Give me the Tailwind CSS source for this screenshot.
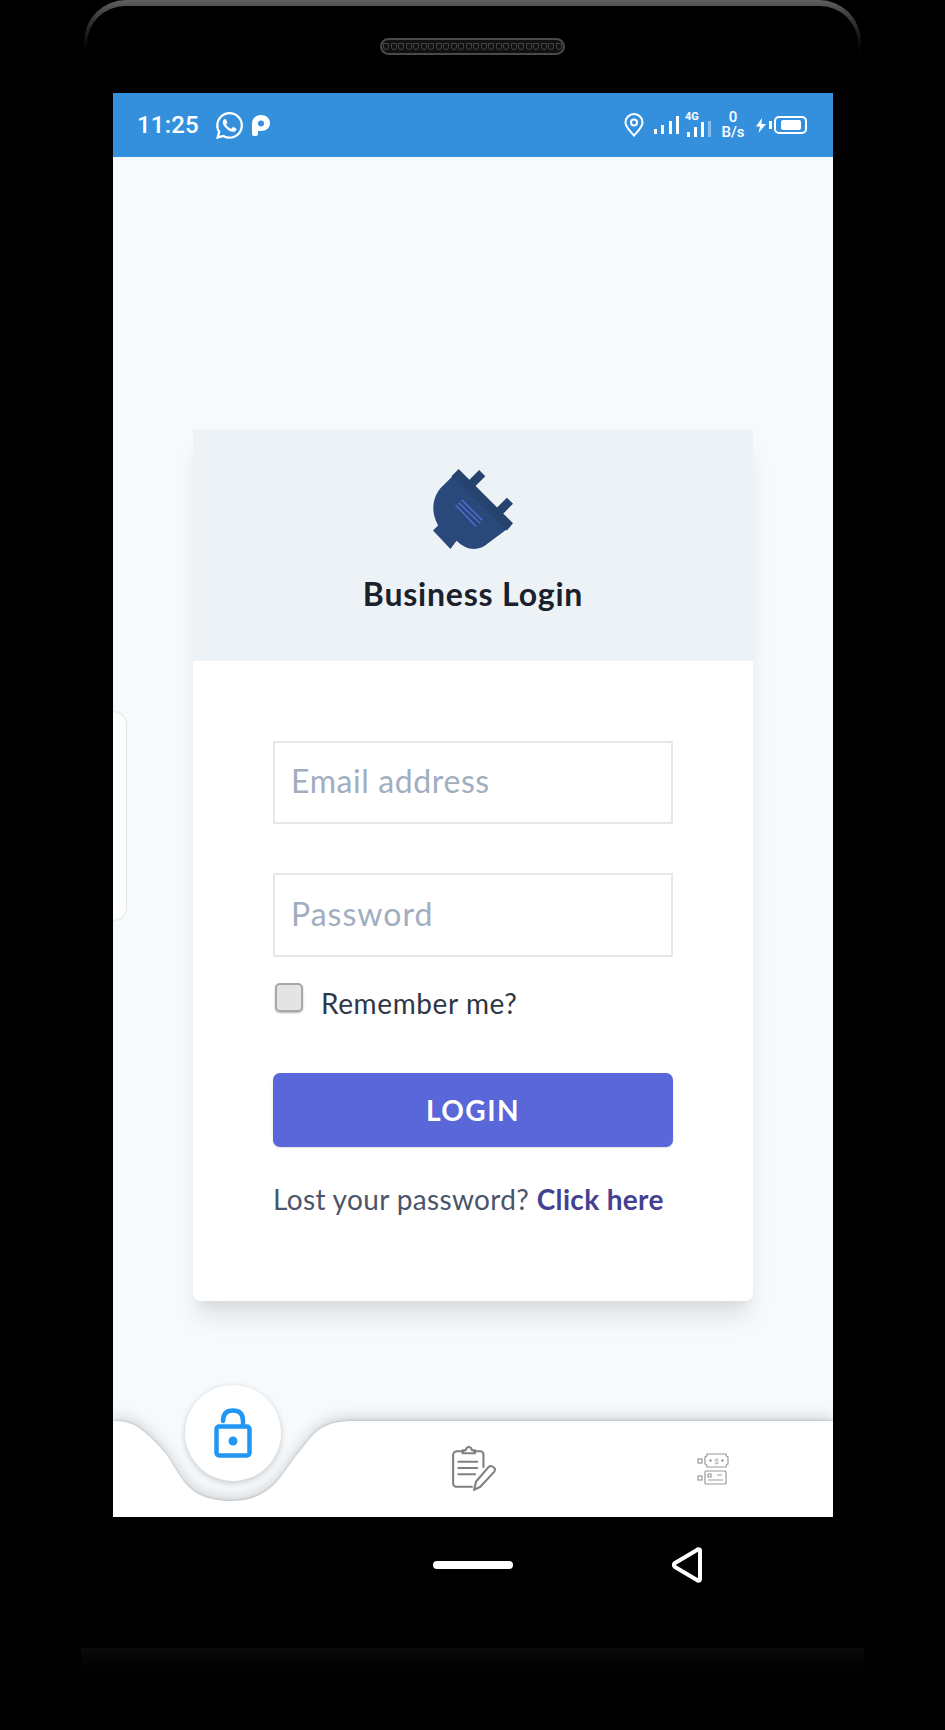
<!DOCTYPE html>
<html lang="en">
<head>
  <meta charset="UTF-8" />
  <meta name="viewport" content="width=device-width, initial-scale=1.0"/>
  <title>Business Login</title>
  <script src="https://cdn.jsdelivr.net/npm/@tailwindcss/browser@4"></script>
</head>
<body class="w-[945px] h-[1730px] bg-black overflow-hidden flex flex-col font-['Lato',sans-serif]">

  <!-- phone top: edge highlight and speaker -->
  <div class="h-[93px] px-[84px] shrink-0">
    <div class="h-[62px] rounded-t-[42px] bg-linear-to-b from-[#606060] to-black pt-[6px] px-[3px]">
      <div class="h-full rounded-t-[38px] bg-black flex justify-center pt-[32px]">
        <div class="w-[185px] h-[17px] rounded-full bg-[#111] border-2 border-[#4a4a4a] flex items-center justify-center gap-[1.5px]">
          <span class="w-[6px] h-[7px] rounded-b-full border border-[#444]"></span><span class="w-[6px] h-[7px] rounded-b-full border border-[#444]"></span><span class="w-[6px] h-[7px] rounded-b-full border border-[#444]"></span><span class="w-[6px] h-[7px] rounded-b-full border border-[#444]"></span><span class="w-[6px] h-[7px] rounded-b-full border border-[#444]"></span><span class="w-[6px] h-[7px] rounded-b-full border border-[#444]"></span><span class="w-[6px] h-[7px] rounded-b-full border border-[#444]"></span><span class="w-[6px] h-[7px] rounded-b-full border border-[#444]"></span><span class="w-[6px] h-[7px] rounded-b-full border border-[#444]"></span><span class="w-[6px] h-[7px] rounded-b-full border border-[#444]"></span><span class="w-[6px] h-[7px] rounded-b-full border border-[#444]"></span><span class="w-[6px] h-[7px] rounded-b-full border border-[#444]"></span><span class="w-[6px] h-[7px] rounded-b-full border border-[#444]"></span><span class="w-[6px] h-[7px] rounded-b-full border border-[#444]"></span><span class="w-[6px] h-[7px] rounded-b-full border border-[#444]"></span><span class="w-[6px] h-[7px] rounded-b-full border border-[#444]"></span><span class="w-[6px] h-[7px] rounded-b-full border border-[#444]"></span><span class="w-[6px] h-[7px] rounded-b-full border border-[#444]"></span><span class="w-[6px] h-[7px] rounded-b-full border border-[#444]"></span><span class="w-[6px] h-[7px] rounded-b-full border border-[#444]"></span><span class="w-[6px] h-[7px] rounded-b-full border border-[#444]"></span><span class="w-[6px] h-[7px] rounded-b-full border border-[#444]"></span><span class="w-[6px] h-[7px] rounded-b-full border border-[#444]"></span><span class="w-[6px] h-[7px] rounded-b-full border border-[#444]"></span>
        </div>
      </div>
    </div>
  </div>

  <!-- screen -->
  <div class="relative ml-[113px] w-[720px] h-[1424px] shrink-0 flex flex-col bg-[#f7fafc] overflow-hidden">

    <!-- status bar -->
    <div class="h-[64px] shrink-0 bg-[#3490dc] text-white flex items-center pl-[24px] pr-[26px] font-['Roboto',sans-serif]">
      <span class="text-[24px] font-medium tracking-[0.2px] leading-none">11:25</span>
      <svg class="ml-[17px]" width="27" height="27" viewBox="0 0 24 24" fill="white"><path d="M17.472 14.382c-.297-.149-1.758-.867-2.03-.967-.273-.099-.471-.148-.67.15-.197.297-.767.966-.94 1.164-.173.199-.347.223-.644.075-.297-.15-1.255-.463-2.39-1.475-.883-.788-1.48-1.761-1.653-2.059-.173-.297-.018-.458.13-.606.134-.133.298-.347.446-.52.149-.174.198-.298.298-.497.099-.198.05-.371-.025-.52-.075-.149-.669-1.612-.916-2.207-.242-.579-.487-.5-.669-.51-.173-.008-.371-.01-.57-.01-.198 0-.52.074-.792.372-.272.297-1.04 1.016-1.04 2.479 0 1.462 1.065 2.875 1.213 3.074.149.198 2.096 3.2 5.077 4.487.709.306 1.262.489 1.694.625.712.227 1.36.195 1.871.118.571-.085 1.758-.719 2.006-1.413.248-.694.248-1.289.173-1.413-.074-.124-.272-.198-.57-.347m-5.421 7.403h-.004a9.87 9.87 0 01-5.031-1.378l-.361-.214-3.741.982.998-3.648-.235-.374a9.86 9.86 0 01-1.51-5.26c.001-5.45 4.436-9.884 9.888-9.884 2.64 0 5.122 1.03 6.988 2.898a9.825 9.825 0 012.893 6.994c-.003 5.45-4.437 9.884-9.885 9.884m8.413-18.297A11.815 11.815 0 0012.05 0C5.495 0 .16 5.335.157 11.892c0 2.096.547 4.142 1.588 5.945L.057 24l6.305-1.654a11.882 11.882 0 005.683 1.448h.005c6.554 0 11.89-5.335 11.893-11.893a11.821 11.821 0 00-3.48-8.413z"/></svg>
      <svg class="ml-[9px]" width="18" height="21" viewBox="0 0 18 21" fill="white"><path fill-rule="evenodd" d="M0 8.500C0 3.500 4 0 9 0s9 3.500 9 8s-3.500 8-9 8H6v3a2 2 0 0 1-2 2H2a2 2 0 0 1-2-2ZM6 8.500a3 3 0 1 0 6 0a3 3 0 1 0-6 0Z"/></svg>

      <div class="ml-auto flex items-center">
        <svg width="20" height="24" viewBox="0 0 20 24" fill="none" stroke="white" stroke-width="2"><path d="M10 22.500C6 18 1.500 14 1.500 9.500a8.500 8.500 0 0 1 17 0C18.500 14 14 18 10 22.500Z"/><circle cx="10" cy="9.500" r="3"/></svg>
        <svg class="ml-[10px]" width="25" height="18" viewBox="0 0 25 18" fill="white"><rect x="0" y="13" width="3" height="5"/><rect x="7" y="9" width="3" height="9"/><rect x="15" y="5" width="3" height="13"/><rect x="22" y="0" width="3" height="18"/></svg>
        <div class="ml-[6px] w-[27px] h-[24px] flex flex-col">
          <span class="text-[11px] leading-[8px] font-bold">4G</span>
          <svg width="26" height="16" viewBox="0 0 26 16" fill="white"><rect x="2" y="11" width="3" height="5"/><rect x="9" y="6" width="3" height="10"/><rect x="16" y="1" width="3" height="15"/><rect x="23" y="0" width="3" height="16" fill-opacity=".4"/></svg>
        </div>
        <div class="ml-[8px] w-[26px] flex flex-col items-center font-medium text-[15px] leading-[15px]"><span>0</span><span>B/s</span></div>
        <svg class="ml-[10px]" width="10" height="15" viewBox="0 0 10 15" fill="white"><path d="M6 0 0 8.500h4L2.500 15 10 6H5.500Z"/></svg>
        <span class="ml-[3px] w-[3px] h-[8px] bg-white"></span>
        <div class="ml-[2px] w-[33px] h-[18px] rounded-[5px] border-2 border-white p-[2px] pl-[5px]"><div class="w-[20px] h-full rounded-[2px] bg-white"></div></div>
      </div>
    </div>

    <!-- login card -->
    <main class="flex-1 min-h-0 px-[80px] pt-[272px]">
      <div class="bg-white rounded-b-lg shadow-[0_20px_25px_-5px_rgba(0,0,0,0.1),0_10px_10px_-5px_rgba(0,0,0,0.04)]">
        <div class="h-[232px] bg-[#edf2f6] flex flex-col items-center pt-[40px]">
          <svg width="80" height="80" viewBox="0 0 78 78">
            <path fill="#28497a" d="M20 6 7 19C-1 29-2 43 5 55L0 60 17 78 23 70C28 75 34 78 40 78 45 78 50 76 53 73L73 58Z"/>
            <path fill="#26436f" d="M25 0 78 53 72 60 18 7Z"/>
            <path fill="#26436f" d="M45 1 51 7 40 18 34 12ZM72 28 78 34 67 45 61 39Z"/>
            <path stroke="#5a6adb" stroke-width="1.300" d="M22 35 42 56M25 33 46 53M28 30 48 50"/>
          </svg>
          <h1 class="mt-[24px] text-[32px] leading-[42px] font-bold tracking-[0.8px] text-[#1a202c]">Business Login</h1>
        </div>
        <form class="px-[80px] pt-[80px] pb-[82px]">
          <input type="text" placeholder="Email address" class="block w-full h-[83px] px-[16px] pb-[4px] border-2 border-[#e4e7eb] text-[32px] tracking-[0.6px] text-[#2d3748] placeholder:text-[#a0aec0] outline-none"/>
          <input type="password" placeholder="Password" class="block w-full h-[84px] mt-[49px] px-[16px] pb-[4px] border-2 border-[#e4e7eb] text-[32px] tracking-[1px] text-[#2d3748] placeholder:text-[#a0aec0] outline-none"/>
          <label class="flex items-start mt-[26px] h-[40px]">
            <input type="checkbox" class="appearance-none ml-[2px] w-[28px] h-[29px] rounded-[5px] bg-[#e4e4e4] border-2 border-[#a8a8a8] shadow-[0_1px_2px_rgba(0,0,0,0.3)]"/>
            <span class="ml-[18px] text-[28px] leading-[40px] tracking-[0.6px] text-[#2d3748]">Remember me?</span>
          </label>
          <button type="button" class="block w-full h-[74px] mt-[50px] rounded-[7px] bg-[#5a67d8] text-white text-[28px] font-bold tracking-[1.500px] shadow-sm">LOGIN</button>
          <p class="mt-[32px] text-[28px] leading-[40px] whitespace-nowrap tracking-[0.35px] text-[#4a5568]">Lost your password? <a href="#" class="font-bold text-[#434190]">Click here</a></p>
        </form>
      </div>
    </main>

    <!-- bottom navigation -->
    <nav class="relative h-[97px] shrink-0 flex items-center">
      <svg class="absolute left-0 bottom-0 [filter:drop-shadow(0_-1px_1px_rgba(0,0,0,0.14))_drop-shadow(0_-3px_7px_rgba(0,0,0,0.16))]" width="720" height="97" viewBox="0 0 720 97"><path fill="white" d="M0 1C14 1 22 4 30 11 40 19 46 26 53 34 60 44 66 56 73 64 82 74 94 81 120 81 140 81 156 72 167 58 174 49 180 39 187 31 194 22 200 14 207 9 216 3 228 1 240 1H720V97H0Z"/></svg>
      <svg class="absolute left-[337px] top-[26px]" width="46" height="46" viewBox="0 0 44 44" fill="none" stroke="#808080" stroke-width="2" stroke-linecap="round" stroke-linejoin="round"><path d="M13 5H6a4 4 0 0 0-3 3V36a3 3 0 0 0 3 3H21M32 20V8a3 3 0 0 0-3-3H23"/><path d="M12 7H24V4H21C20 0 16 0 15 4H12ZM8 15H26M8 21H26M8 27H24"/><path d="M23 42 25 34 37 20C39 18 42 20 43 22 43 23 43 24 42 25L29 39Z"/></svg>
      <svg class="absolute left-[584px] top-[33px]" width="32" height="32" viewBox="0 0 32 32" fill="none" stroke="#999" stroke-width="1.200"><rect x="1" y="6" width="4" height="4"/><rect x="1" y="23" width="4" height="4"/><path d="M10 1H29C29 3 30 4 31 4V11C30 11 29 12 29 14H10C10 12 9 11 8 11V4C9 4 10 3 10 1Z"/><text x="19.500" y="10.500" text-anchor="middle" font-size="8" fill="#999" stroke="none" font-family="Roboto, sans-serif">$</text><circle cx="13.500" cy="7.500" r=".7"/><circle cx="25.500" cy="7.500" r=".7"/><rect x="8" y="18" width="21" height="13" rx="1"/><path d="M11 21H14V24H11ZM20 22H25M11 27H26"/></svg>
    </nav>

    <!-- side tab and floating button sit over the page -->
    <div class="absolute left-0 top-[618px] w-[14px] h-[210px] rounded-r-[24px] bg-white/70 border border-l-0 border-[#e4e7ea]"></div>
    <div class="absolute left-[72px] top-[1292px] w-[96px] h-[96px] rounded-full bg-white shadow-[0_2px_6px_rgba(0,0,0,0.2)] flex items-center justify-center">
      <svg width="38" height="50" viewBox="0 0 38 50" fill="none"><path stroke="#2196f3" stroke-width="4.500" stroke-linecap="round" d="M9 13C9 5 13 2.500 19 2.500S29 5 29 13V18"/><rect x="2.500" y="18.500" width="33" height="29" rx="2.500" stroke="#2196f3" stroke-width="4.500"/><circle cx="19" cy="33" r="4.500" fill="#2196f3"/></svg>
    </div>
  </div>

  <!-- phone chin: navigation keys and bottom edge -->
  <div class="h-[97px] shrink-0 flex items-center pl-[433px] pb-[2px]">
    <span class="w-[80px] h-[8px] rounded-full bg-white"></span>
    <svg class="ml-[157px]" width="34" height="36" viewBox="0 0 34 36" fill="none" stroke="white" stroke-width="4" stroke-linejoin="round"><path d="M30 3C29 2 28 2 27 3L5 16C3.500 17 3.500 19 5 20L27 33C28 34 30 34 30 32Z"/></svg>
  </div>
  <div class="h-[34px] shrink-0"></div>
  <div class="mx-[81px] h-[53px] rounded-b-[30px] bg-linear-to-b from-[#0b0b0b] to-black"></div>
</body>
</html>
